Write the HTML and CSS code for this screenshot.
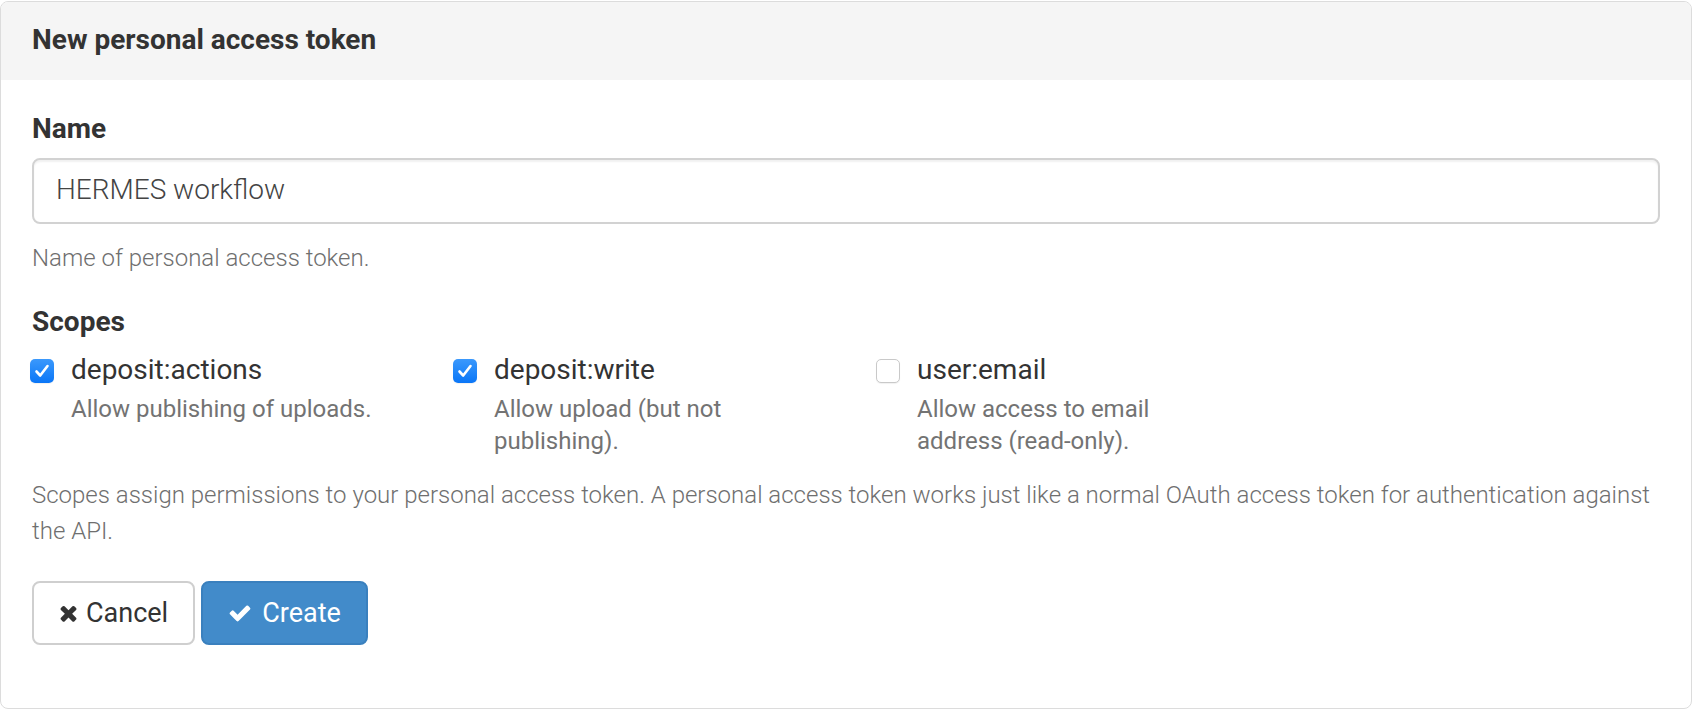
FILE: index.html
```html
<!DOCTYPE html>
<html lang="en">
<head>
<meta charset="utf-8">
<title>New personal access token</title>
<link rel="stylesheet" href="styles.css">
</head>
<body>
<div class="panel">
  <div class="panel-heading">
    <h3 class="panel-title">New personal access token</h3>
  </div>
  <div class="panel-body">
    <div class="form-group">
      <label class="control-label" for="name">Name</label>
      <div class="form-control" id="name">HERMES workflow</div>
      <p class="help-block">Name of personal access token.</p>
    </div>
    <div class="form-group scopes-group">
      <div class="control-label">Scopes</div>
      <div class="scopes">
        <div class="scope">
          <span class="cb checked"><svg viewBox="0 0 24 24" width="24" height="24"><path d="M6.5 12.5 L10.2 16.5 L17.5 7" fill="none" stroke="#fff" stroke-width="2.6" stroke-linecap="round" stroke-linejoin="round"/></svg></span>
          <div class="scope-text">
            <div class="scope-name">deposit:actions</div>
            <div class="scope-desc">Allow publishing of uploads.</div>
          </div>
        </div>
        <div class="scope">
          <span class="cb checked"><svg viewBox="0 0 24 24" width="24" height="24"><path d="M6.5 12.5 L10.2 16.5 L17.5 7" fill="none" stroke="#fff" stroke-width="2.6" stroke-linecap="round" stroke-linejoin="round"/></svg></span>
          <div class="scope-text">
            <div class="scope-name">deposit:write</div>
            <div class="scope-desc">Allow upload (but not publishing).</div>
          </div>
        </div>
        <div class="scope">
          <span class="cb"></span>
          <div class="scope-text">
            <div class="scope-name">user:email</div>
            <div class="scope-desc">Allow access to email address (read-only).</div>
          </div>
        </div>
      </div>
      <p class="help-block help-scopes">Scopes assign permissions to your personal access token. A personal access token works just like a normal OAuth access token for authentication against the API.</p>
    </div>
    <div class="actions">
      <button class="btn btn-default" type="button"><svg class="ico ico-times" viewBox="0 0 1408 1792"><path d="M1298 1322q0 40-28 68l-136 136q-28 28-68 28t-68-28l-294-294-294 294q-28 28-68 28t-68-28l-136-136q-28-28-28-68t28-68l294-294-294-294q-28-28-28-68t28-68l136-136q28-28 68-28t68 28l294 294 294-294q28-28 68-28t68 28l136 136q28 28 28 68t-28 68l-294 294 294 294q28 28 28 68z" fill="#333"/></svg>Cancel</button>
      <button class="btn btn-primary" type="button"><svg class="ico ico-check" viewBox="0 0 1792 1792"><path d="M1671 566q0 40-28 68l-724 724-136 136q-28 28-68 28t-68-28l-136-136-362-362q-28-28-28-68t28-68l136-136q28-28 68-28t68 28l294 295 656-657q28-28 68-28t68 28l136 136q28 28 28 68z" fill="#fff"/></svg>Create</button>
    </div>
  </div>
</div>
</body>
</html>
```

FILE: styles.css
```css
* { box-sizing: border-box; }

html, body {
  margin: 0;
  padding: 0;
  background: #fff;
}

body {
  font-family: Roboto, "Liberation Sans", sans-serif;
  color: #333;
}

.panel {
  margin: 1px 2px 0 0;
  height: 708px;
  border: 1px solid #dcdcdc;
  border-radius: 8px;
  overflow: hidden;
  background: #fff;
}

.panel-heading {
  height: 78px;
  background: #f5f5f5;
  padding: 0 31px;
  display: flex;
  align-items: center;
}

.panel-title {
  margin: 0;
  font-size: 28px;
  font-weight: 700;
  color: #333;
  line-height: 1;
  padding-bottom: 2px;
}

.panel-body {
  padding: 28px 31px 0 31px;
}

.control-label {
  display: block;
  font-size: 28px;
  font-weight: 700;
  line-height: 41px;
  color: #333;
}

.form-control {
  margin-top: 9px;
  height: 66px;
  border: 2px solid #d2d2d2;
  border-radius: 8px;
  box-shadow: inset 0 2px 2px rgba(0, 0, 0, 0.06);
  padding: 0 22px 4px 22px;
  display: flex;
  align-items: center;
  font-size: 28px;
  font-weight: 300;
  color: #444;
}

.help-block {
  margin: 16px 0 0 0;
  font-size: 24px;
  font-weight: 300;
  line-height: 36px;
  color: #6f6f6f;
}

.scopes-group {
  margin-top: 25px;
}

.scopes {
  display: flex;
  margin-top: 8px;
  margin-left: -2px;
}

.scope {
  width: 423px;
  display: flex;
  align-items: flex-start;
}

.cb {
  flex: none;
  width: 24px;
  height: 24px;
  margin-top: 9px;
  border-radius: 5px;
  background: #fff;
  border: 1px solid #c9c9c9;
  box-shadow: 0 1px 1px rgba(0, 0, 0, 0.06);
}

.cb.checked {
  border: none;
  background: linear-gradient(#3b99fc, #0a76f7);
}

.cb svg {
  display: block;
}

.scope-text {
  margin-left: 17px;
  width: 305px;
}

.scope-name {
  font-size: 28px;
  line-height: 40px;
  color: #333;
}

.scope-desc {
  margin-top: 3px;
  font-size: 24px;
  line-height: 32px;
  color: #737373;
}

.help-scopes {
  margin-top: 20px;
}

.actions {
  display: flex;
  gap: 6px;
  margin-top: 32px;
}

.btn {
  height: 64px;
  padding: 0 25px;
  display: flex;
  align-items: center;
  border-radius: 8px;
  font-family: Roboto, "Liberation Sans", sans-serif;
  font-size: 27px;
  font-weight: 400;
  cursor: pointer;
}

.btn-default {
  background: #fff;
  border: 2px solid #cfcfcf;
  color: #333;
}

.btn-primary {
  background: #428bca;
  border: 2px solid #3a80be;
  color: #fff;
}

.ico {
  display: block;
  margin-right: 8px;
}

.ico-times {
  width: 19px;
  height: 24px;
}

.ico-check {
  width: 24px;
  height: 24px;
  margin-right: 10px;
}
```
